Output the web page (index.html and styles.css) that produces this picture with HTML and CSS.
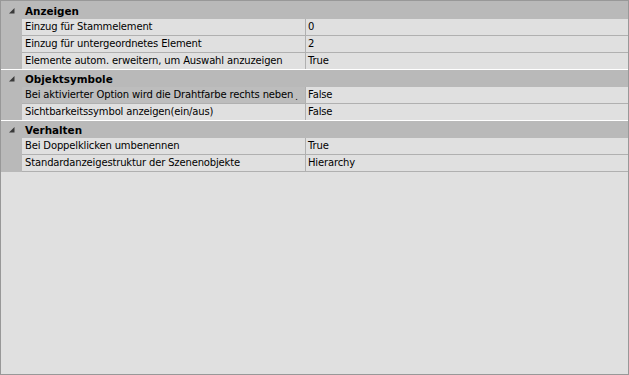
FILE: index.html
```html
<!DOCTYPE html>
<html lang="de">
<head>
<meta charset="utf-8">
<title>Eigenschaften</title>
<link rel="stylesheet" href="styles.css">
</head>
<body>
<div class="panel">
  <div class="group first">
    <div class="ghead"><span class="tri"><svg width="6" height="6" viewBox="0 0 6 6"><polygon points="0,5.5 5.5,0 5.5,5.5" fill="#3a3a3a"/></svg></span><span class="gtitle">Anzeigen</span></div>
    <div class="row"><div class="gut"></div><div class="name">Einzug für Stammelement</div><div class="val">0</div></div>
    <div class="row"><div class="gut"></div><div class="name">Einzug für untergeordnetes Element</div><div class="val">2</div></div>
    <div class="row"><div class="gut"></div><div class="name">Elemente autom. erweitern, um Auswahl anzuzeigen</div><div class="val">True</div></div>
  </div>
  <div class="group">
    <div class="ghead"><span class="tri"><svg width="6" height="6" viewBox="0 0 6 6"><polygon points="0,5.5 5.5,0 5.5,5.5" fill="#3a3a3a"/></svg></span><span class="gtitle">Objektsymbole</span></div>
    <div class="row"><div class="gut"></div><div class="name sel">Bei aktivierter Option wird die Drahtfarbe rechts neben<span class="dot">.</span></div><div class="val">False</div></div>
    <div class="row"><div class="gut"></div><div class="name">Sichtbarkeitssymbol anzeigen(ein/aus)</div><div class="val">False</div></div>
  </div>
  <div class="group last">
    <div class="ghead"><span class="tri"><svg width="6" height="6" viewBox="0 0 6 6"><polygon points="0,5.5 5.5,0 5.5,5.5" fill="#3a3a3a"/></svg></span><span class="gtitle">Verhalten</span></div>
    <div class="row"><div class="gut"></div><div class="name">Bei Doppelklicken umbenennen</div><div class="val">True</div></div>
    <div class="row"><div class="gut"></div><div class="name">Standardanzeigestruktur der Szenenobjekte</div><div class="val">Hierarchy</div></div>
  </div>
</div>
</body>
</html>
```
FILE: styles.css
```css
html, body {
  margin: 0;
  padding: 0;
}
body {
  width: 629px;
  height: 375px;
  font-family: "DejaVu Sans", Verdana, sans-serif;
  font-size: 10px;
  letter-spacing: -0.15px;
  color: #000;
}
.panel {
  box-sizing: border-box;
  width: 629px;
  height: 375px;
  border: 1px solid #989898;
  background: #e0e0e0;
}
.group {
  border-top: 1px solid #ffffff;
}
.group.first {
  border-top-color: #b9b9b9;
}
.ghead {
  height: 17px;
  background: #b9b9b9;
  display: flex;
  align-items: center;
}
.tri {
  width: 21px;
  flex: none;
  display: flex;
  box-sizing: border-box;
  padding-left: 8px;
  padding-top: 1px;
}
.tri svg {
  display: block;
}
.gtitle {
  font-weight: bold;
  padding-left: 3px;
  font-size: 10.4px;
  letter-spacing: 0;
}
.row {
  display: flex;
  height: 16px;
  background: #b9b9b9;
}
.row + .row {
  height: 17px;
}
.row + .row .name,
.row + .row .val {
  border-top: 1px solid #b0b0b0;
}
.group.last .row:last-child {
  height: 18px;
}
.group.last .row:last-child .name,
.group.last .row:last-child .val {
  border-bottom: 1px solid #b0b0b0;
}
.gut {
  width: 21px;
  flex: none;
}
.name, .val {
  line-height: 16px;
  white-space: nowrap;
  overflow: hidden;
  background: #e0e0e0;
}
.name {
  flex: none;
  width: 284px;
  padding-left: 3px;
  box-sizing: border-box;
  border-right: 1px solid #b0b0b0;
}
.name.sel {
  background: #bdbdbd;
}
.dot {
  font-size: 8px;
  padding-left: 2px;
  position: relative;
  top: 2px;
}
.val {
  flex: 1;
  padding-left: 2px;
}
```
